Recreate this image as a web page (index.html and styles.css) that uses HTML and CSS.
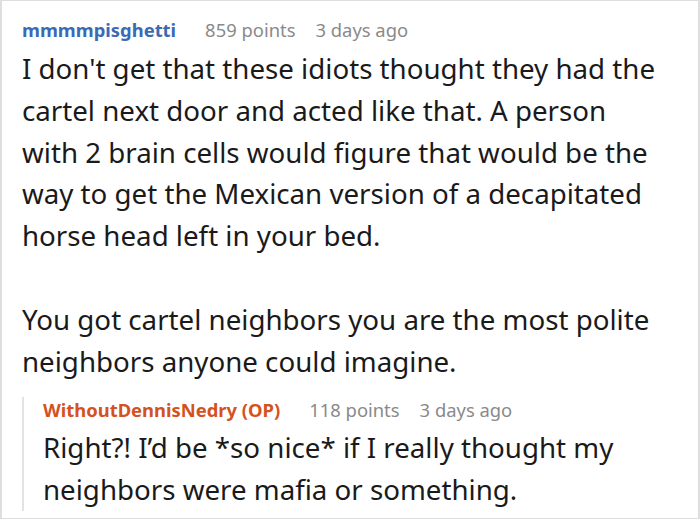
FILE: index.html
```html
<!DOCTYPE html>
<html>
<head>
<meta charset="utf-8">
<link rel="stylesheet" href="styles.css">
</head>
<body>
<div class="frame">
  <div class="comment">
    <div class="meta">
      <span class="user">mmmmpisghetti</span>
      <span class="info">859 points</span>
      <span class="info">3 days ago</span>
    </div>
    <div class="text">I don't get that these idiots thought they had the cartel next door and acted like that. A person with 2 brain cells would figure that would be the way to get the Mexican version of a decapitated horse head left in your bed.<br><br>You got cartel neighbors you are the most polite neighbors anyone could imagine.</div>
    <div class="reply">
      <div class="meta">
        <span class="user op">WithoutDennisNedry (OP)</span>
        <span class="info">118 points</span>
        <span class="info">3 days ago</span>
      </div>
      <div class="text">Right?! I’d be *so nice* if I really thought my neighbors were mafia or something.</div>
    </div>
  </div>
</div>
</body>
</html>
```
FILE: styles.css
```css
html, body {
  margin: 0;
  padding: 0;
  background: #ffffff;
}
.frame {
  width: 700px;
  height: 519px;
  box-sizing: border-box;
  border: 1px solid #dedede;
  border-left-width: 2px;
  border-right-width: 2px;
  overflow: hidden;
  font-family: "Noto Sans", "Open Sans", sans-serif;
}
.comment {
  padding: 16px 38px 0 20px;
}
.meta {
  display: flex;
  gap: 20px;
  font-size: 18.4px;
  line-height: 26px;
  height: 26px;
}
.user {
  color: #3a6ab4;
  font-weight: 700;
  margin-right: 9px;
}
.user.op {
  color: #d4521d;
}
.info {
  color: #8a8a8a;
}
.text {
  margin-top: 5px;
  font-size: 27.7px;
  line-height: 41.8px;
  color: #1a1a1b;
}
.reply {
  margin-top: 15px;
  border-left: 2px solid #e3e3e3;
  padding-left: 19px;
}
.reply .text {
  margin-top: 4px;
}
```
